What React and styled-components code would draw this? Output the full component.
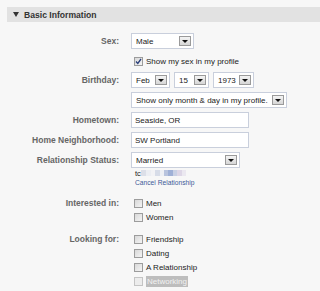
import React from 'react';
import styled, { createGlobalStyle } from 'styled-components';

const GlobalStyle = createGlobalStyle`
  html, body {
    margin: 0;
    padding: 0;
    background: #f7f7f7;
  }
  body {
    font-family: "Liberation Sans", Arial, sans-serif;
    font-size: 8px;
    color: #333;
  }
`;

const Page = styled.div`
  width: 320px;
  height: 291px;
  overflow: hidden;
  background: #f7f7f7;
`;

const SectionHeader = styled.div`
  margin: 7px 0 0 7px;
  height: 15px;
  background: #e2e2e2;
  display: flex;
  align-items: center;
  padding-left: 6px;
  gap: 5px;
  font-weight: bold;
  font-size: 8.6px;
  color: #333;
`;

const Arrow = styled.span`
  width: 0;
  height: 0;
  border-left: 3px solid transparent;
  border-right: 3px solid transparent;
  border-top: 5px solid #333;
`;

const Form = styled.div`
  padding-top: 11px;
  display: flex;
  flex-direction: column;
`;

const Row = styled.div`
  display: grid;
  grid-template-columns: 119px 1fr;
  column-gap: 12px;
  margin-top: ${p => p.$gap || 0}px;
`;

const Label = styled.div`
  text-align: right;
  font-weight: bold;
  font-size: 8.5px;
  color: #666;
  line-height: ${p => p.$lh || 16}px;
`;

const Controls = styled.div`
  display: flex;
  flex-direction: column;
  gap: ${p => p.$gap || 0}px;
`;

const Inline = styled.div`
  display: flex;
  gap: 4px;
`;

const SelectBox = styled.div`
  box-sizing: border-box;
  width: ${p => p.$w}px;
  height: 16px;
  border: 1px solid #c9cfdc;
  background: #fff;
  display: flex;
  align-items: center;
  justify-content: space-between;
  padding: 0 2px 0 4px;
  color: #222;
`;

const DropButton = styled.span`
  box-sizing: border-box;
  width: 12px;
  height: 10px;
  border: 1px solid #9a9a9a;
  background: linear-gradient(#f4f4f4, #d6d6d6);
  display: flex;
  align-items: center;
  justify-content: center;
  &::after {
    content: '';
    border-left: 3px solid transparent;
    border-right: 3px solid transparent;
    border-top: 3px solid #111;
    margin-top: 1px;
  }
`;

const TextBox = styled.div`
  box-sizing: border-box;
  width: 118px;
  height: 16px;
  border: 1px solid #c9cfdc;
  background: #fff;
  display: flex;
  align-items: center;
  padding-left: 3px;
  color: #222;
`;

const CheckRow = styled.div`
  height: 14px;
  display: flex;
  align-items: center;
  gap: 3px;
  padding-left: 3px;
  color: ${p => (p.$disabled ? '#f2f2f2' : '#222')};
`;

const Box = styled.span`
  box-sizing: border-box;
  width: 9px;
  height: 9px;
  border: 1px solid ${p => (p.$disabled ? '#c4c4c4' : '#9c9c9c')};
  background: ${p => (p.$disabled ? '#ececec' : 'linear-gradient(135deg, #d8d8d8, #f4f4f4)')};
  display: flex;
  align-items: center;
  justify-content: center;
`;

const CheckText = styled.span`
  background: ${p => (p.$disabled ? '#bdbdbd' : 'transparent')};
  padding: ${p => (p.$disabled ? '1px 1px' : '0')};
`;

const NameLine = styled.div`
  height: 10px;
  display: flex;
  align-items: center;
  padding-left: 4px;
  color: #222;
  font-size: 7.5px;
`;

const Pixel = styled.span`
  display: inline-block;
  width: ${p => p.$w}px;
  height: 6px;
  background: ${p => p.$c};
`;

const CancelLink = styled.a`
  height: 10px;
  line-height: 10px;
  padding-left: 4px;
  color: #3b5998;
  font-size: 6.7px;
  text-decoration: none;
`;

function Select({ w, children }) {
  return (
    <SelectBox $w={w}>
      <span>{children}</span>
      <DropButton />
    </SelectBox>
  );
}

function Check({ checked, disabled, children }) {
  return (
    <CheckRow $disabled={disabled}>
      <Box $disabled={disabled}>
        {checked && (
          <svg width="7" height="7" viewBox="0 0 7 7">
            <path d="M1 3.5 L2.8 5.5 L6 1" stroke="#2a3f7a" strokeWidth="1.3" fill="none" />
          </svg>
        )}
      </Box>
      <CheckText $disabled={disabled}>{children}</CheckText>
    </CheckRow>
  );
}

const blur = [
  ['#dcdfe8', 5], ['#eceef3', 5], ['#f3f3f6', 4], ['#d7dce8', 5], ['#eef0f5', 4],
  ['#b9c4de', 4], ['#9fb0d6', 5], ['#c9d0e4', 4], ['#ddd6e6', 5], ['#ebe8f0', 4],
];

export default function App() {
  return (
    <Page>
      <GlobalStyle />
      <SectionHeader>
        <Arrow />
        Basic Information
      </SectionHeader>
      <Form>
        <Row>
          <Label>Sex:</Label>
          <Controls $gap={5}>
            <Select w={63}>Male</Select>
            <Check checked>Show my sex in my profile</Check>
          </Controls>
        </Row>
        <Row $gap={4}>
          <Label>Birthday:</Label>
          <Controls $gap={4}>
            <Inline>
              <Select w={39}>Feb</Select>
              <Select w={35}>15</Select>
              <Select w={41}>1973</Select>
            </Inline>
            <Select w={156}>Show only month &amp; day in my profile.</Select>
          </Controls>
        </Row>
        <Row $gap={4}>
          <Label>Hometown:</Label>
          <TextBox>Seaside, OR</TextBox>
        </Row>
        <Row $gap={4}>
          <Label>Home Neighborhood:</Label>
          <TextBox>SW Portland</TextBox>
        </Row>
        <Row $gap={4}>
          <Label>Relationship Status:</Label>
          <Controls>
            <Select w={109}>Married</Select>
            <NameLine>
              tc
              {blur.map(([c, w], i) => (
                <Pixel key={i} $c={c} $w={w} />
              ))}
            </NameLine>
            <CancelLink href="#">Cancel Relationship</CancelLink>
          </Controls>
        </Row>
        <Row $gap={8}>
          <Label $lh={14}>Interested in:</Label>
          <Controls>
            <Check>Men</Check>
            <Check>Women</Check>
          </Controls>
        </Row>
        <Row $gap={8}>
          <Label $lh={14}>Looking for:</Label>
          <Controls>
            <Check>Friendship</Check>
            <Check>Dating</Check>
            <Check>A Relationship</Check>
            <Check disabled>Networking</Check>
          </Controls>
        </Row>
      </Form>
    </Page>
  );
}
